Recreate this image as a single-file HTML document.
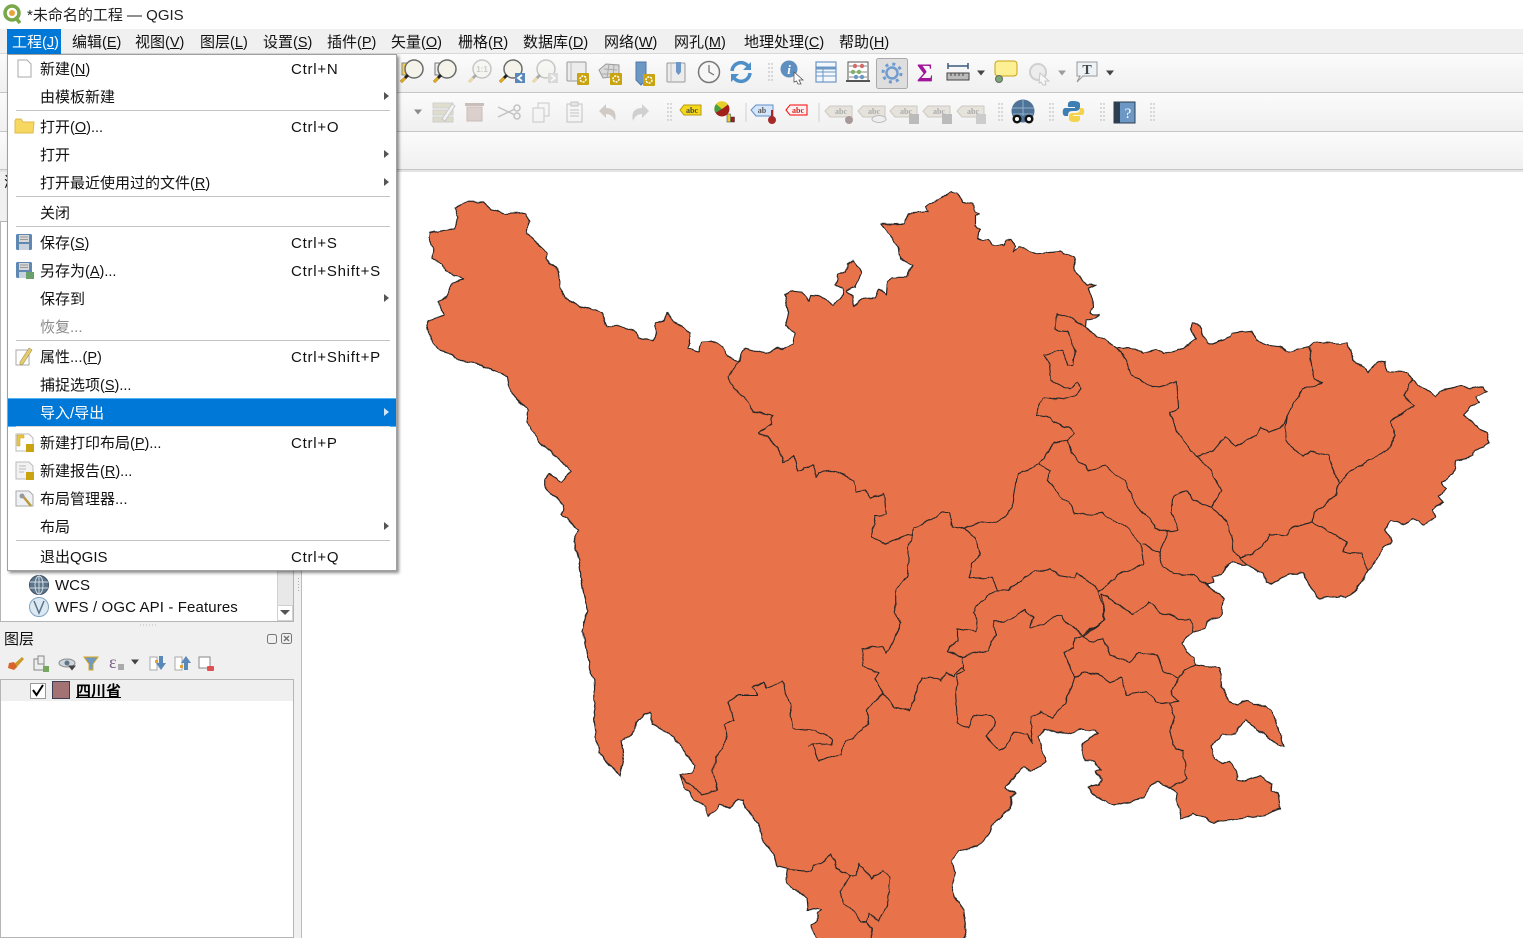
<!DOCTYPE html>
<html lang="zh"><head><meta charset="utf-8"><title>QGIS</title>
<style>
*{box-sizing:border-box}
html,body{margin:0;padding:0;width:1523px;height:938px;overflow:hidden;background:#fff;font-family:"Liberation Sans","Noto Sans CJK SC",sans-serif;font-size:15px;color:#000}
.a{position:absolute;white-space:nowrap}
.tb{position:absolute;left:0;width:1523px;background:linear-gradient(#fbfbfb,#f0f0f0);border-bottom:1px solid #c6c6c6}
.m{position:absolute;top:34px;line-height:18px;color:#111}
i{font-style:normal;font-size:14.5px;line-height:1}
#menu{position:absolute;left:7px;top:54px;width:390px;height:517px;background:#fff;border:1px solid #a0a0a0;box-shadow:2px 2px 3px rgba(0,0,0,.45)}
.r{position:absolute;left:32px;line-height:18px;white-space:nowrap;color:#111;margin-top:2px}
.k{position:absolute;left:283px;line-height:18px;white-space:nowrap;letter-spacing:.75px;color:#111;margin-top:2px}
.s{position:absolute;left:8px;width:374px;height:1px;background:#c4c4c4;margin-top:-1px}
.ar{position:absolute;left:376px;width:0;height:0;border-left:5px solid #555;border-top:4.5px solid transparent;border-bottom:4.5px solid transparent}
</style></head><body>
<div class="a" style="left:0;top:0;width:1523px;height:29px;background:#fff"></div>
<div class="a" style="left:27px;top:6px;line-height:19px;color:#222">*未命名的工程 — QGIS</div>
<div class="a" style="left:0;top:29px;width:1523px;height:25px;background:#f0f0f0;border-bottom:1px solid #d8d8d8"></div>
<div class="a" style="left:7px;top:29px;width:54px;height:25px;background:#0078d7"></div>
<div class="m" style="left:12px;color:#fff">工程<i>(<u>J</u>)</i></div>
<div class="m" style="left:72px">编辑<i>(<u>E</u>)</i></div>
<div class="m" style="left:135px">视图<i>(<u>V</u>)</i></div>
<div class="m" style="left:200px">图层<i>(<u>L</u>)</i></div>
<div class="m" style="left:263px">设置<i>(<u>S</u>)</i></div>
<div class="m" style="left:327px">插件<i>(<u>P</u>)</i></div>
<div class="m" style="left:391px">矢量<i>(<u>O</u>)</i></div>
<div class="m" style="left:458px">栅格<i>(<u>R</u>)</i></div>
<div class="m" style="left:523px">数据库<i>(<u>D</u>)</i></div>
<div class="m" style="left:604px">网络<i>(<u>W</u>)</i></div>
<div class="m" style="left:674px">网孔<i>(<u>M</u>)</i></div>
<div class="m" style="left:744px">地理处理<i>(<u>C</u>)</i></div>
<div class="m" style="left:839px">帮助<i>(<u>H</u>)</i></div>

<div class="tb" style="top:54px;height:39px"></div>
<div class="tb" style="top:93px;height:39px"></div>
<div class="tb" style="top:132px;height:38px"></div>
<div class="a" style="left:0;top:170px;width:1523px;height:2px;background:#e4e4e4"></div>

<!-- left panel -->
<div class="a" style="left:0;top:172px;width:302px;height:766px;background:#f0f0f0;border-right:1px solid #bbb"></div>
<div class="a" style="left:4px;top:174px;line-height:18px">浏览</div>
<div class="a" style="left:0;top:221px;width:294px;height:401px;background:#fff;border:1px solid #b5b5b5"></div>
<div class="a" style="left:277px;top:222px;width:16px;height:383px;background:#e8e8e8;border-left:1px solid #d0d0d0"></div>
<div class="a" style="left:277px;top:605px;width:16px;height:16px;background:#fff;border:1px solid #d0d0d0"></div>
<div class="a" style="left:280px;top:610px;width:0;height:0;border-top:5px solid #555;border-left:5px solid transparent;border-right:5px solid transparent"></div>
<div class="a" style="left:55px;top:577px;line-height:18px;color:#111;font-size:15px">WCS</div>
<div class="a" style="left:55px;top:599px;line-height:18px;color:#111;font-size:15px;letter-spacing:.12px">WFS / OGC API - Features</div>
<div class="a" style="left:4px;top:631px;line-height:18px;color:#111">图层</div>
<div class="a" style="left:0;top:679px;width:294px;height:259px;background:#fff;border:1px solid #b5b5b5"></div>
<div class="a" style="left:1px;top:680px;width:292px;height:21px;background:#efefef"></div>
<div class="a" style="left:30px;top:683px;width:16px;height:16px;background:#fff;border:1px solid #999"></div>
<div class="a" style="left:52px;top:681px;width:18px;height:18px;background:#a37272;border:1px solid #3d3d55"></div>
<div class="a" style="left:76px;top:682px;line-height:19px;font-weight:bold;text-decoration:underline;color:#000">四川省</div>

<!-- map -->
<svg class="a" style="left:0;top:0" width="1523" height="938" viewBox="0 0 1523 938">
<defs><filter id="rough" x="300" y="170" width="1223" height="790" filterUnits="userSpaceOnUse"><feTurbulence type="fractalNoise" baseFrequency="0.09" numOctaves="2" seed="4"/><feDisplacementMap in="SourceGraphic" scale="5" xChannelSelector="R" yChannelSelector="G"/></filter></defs>
<g filter="url(#rough)">
<path fill="#e8724a" stroke="#262626" stroke-width="1.2" stroke-linejoin="round" d="M468.6 201.7L482.9 202 491 209.3 507 213.3 525 212.3 529.3 221.7 527.5 233.3 533.9 240 548.2 253.3 547 258.3 557 268.3 560.7 286.7 566 298.3 575 305 596.4 310.7 601.8 313.3 607.9 326.7 618.6 325.7 635.7 331.7 638.6 336.7 651.8 341.3 656.4 333.3 655.7 322.7 664.3 320 667 312 673.2 321.7 682 325 690 333.3 690 343.3 686.8 348.3 698.2 352.7 701.8 341.7 714.3 341 723.2 348.3 728.6 356.7 739.3 361.7 741 353.3 744.6 348.3 766 353.3 778.6 346.7 784 349.3 792.9 345 794.6 333.3 785.7 325 788.6 313.3 784.6 295 791 290.7 801.8 291.7 809 300.7 810.7 295 819.6 295.7 833.9 306 842.9 295 842.9 288.3 835 285 837.5 275 846.4 271.7 847 263.3 853.6 259.3 861.4 274 855.4 286.7 846.4 290.7 851.8 296.7 853.6 306 862.5 298.3 875 297.3 878.6 289.3 886.4 294 887.5 283.3 892.9 277.3 907 277.3 912.5 265 900 258.3 898.2 248.3 892.9 240 881.4 224 904.3 223.3 908.9 213.3 928.6 211.7 925 206.7 940 199 950 191.7 956.7 192.3 961.7 201.7 973.3 204.3 975 212.3 979.3 214 975 216.7 975 225 979.3 228.3 977.7 238.3 983.3 241 988.3 239 991.7 244.3 1003.3 245.7 1006.7 240 1011.7 240 1014 246.7 1013.3 252.3 1018.3 247.7 1025 248.3 1036.7 253.3 1060 251 1073.3 257.7 1075 271.7 1085 281.7 1086.7 285 1096.7 284.3 1088.3 288.3 1093.3 305 1090 312.3 1098.3 315 1094 318.3 1085.7 320 1085 328.3 1105 340 1117 348.3 1139 350 1142.9 353.3 1157 350 1164 354 1173 350 1184 346.7 1196.4 340 1190 330 1192.9 323.3 1198 324 1206.4 343.3 1210.7 344 1230 338 1232 333.3 1251.8 330.7 1257 340 1266 345 1278.6 346.7 1287.5 351.7 1309 346.7 1314 342.3 1348 343.3 1353.6 360 1367.9 371.7 1371.4 368 1378.6 360.7 1384 361.7 1387.5 371.7 1409 372.7 1411.8 379.3 1421.4 386.7 1435.7 396.7 1441 390 1460.7 386 1469.6 388.3 1484 386 1486.8 391.7 1475 396.7 1480 403.3 1471.4 406.7 1463.6 415 1475 425 1487.5 433.3 1489.3 442.7 1475 450 1473.2 456.7 1457 460 1453.6 473.3 1441 483.3 1446.4 488.3 1439.3 496.7 1442.9 501.7 1432 510 1435.7 516.7 1424.3 526 1413.6 518.3 1403.6 523.3 1391 520.7 1384.6 530 1392 540 1378.6 556.7 1367.9 571.7 1357 588.3 1346.4 598.3 1341 595 1319.6 599 1314.3 591.7 1307 583.3 1303.6 573.3 1289.3 573.3 1273.2 582.7 1266 581.7 1264.3 573.3 1253.6 568.3 1247 566 1232 561.7 1225 566.7 1221.4 575 1212.5 576.7 1214.3 583.3 1206.4 585 1224.3 599 1221.4 615 1207 621.7 1205.4 628.3 1193 631.7 1181.4 643.3 1185.7 651.7 1194.6 657.3 1195 665 1220 668.3 1221.7 686.7 1228.3 701.7 1238.3 705 1246.7 699 1253.3 705 1266.7 705 1272.3 711.7 1280 733.3 1284 746 1278.3 745 1266.7 735 1256.7 730 1245.7 720 1239 728.3 1236.7 734.3 1223.3 734 1211.7 745 1215 760 1223.3 764 1228.3 760.7 1236.7 770 1236.7 779.3 1246.7 780.7 1260 775.7 1272.3 784 1271.7 790 1278.3 793.3 1280 808.3 1266.7 815 1240 818.3 1221.7 820.7 1213.3 823.3 1203.3 818.3 1193.3 813.3 1181.7 819 1180 808.3 1175.7 800 1176.7 793.3 1170 788.3 1158.3 782.7 1151.7 785 1143.3 798.3 1128.3 801.7 1113.3 806 1106.7 803.3 1096.7 796.7 1088.3 787.3 1098.3 785 1101.7 780 1096.7 771.7 1100.7 770.7 1095 761.7 1085 761.7 1082.3 743.3 1098.3 733.3 1095 730.7 1081.7 729.3 1066.7 733.3 1053.3 731.7 1045 729.3 1038.6 738.3 1045.7 761.7 1030.7 771.7 1023.6 767.3 1004 786.7 1016.4 794.3 1011 796.7 1011 808.3 991.4 826.7 989.6 833.3 977 846.7 959.3 850.7 952 860 955 873.3 951.4 885 954 896.7 963 910 966.4 930 962 950 823.6 950 812.9 930 811 925 816.4 921.7 816.4 913.3 821.8 909.3 818.2 908.3 808.6 910 807.5 898.3 786 883.3 787.9 869.3 777 866.7 773.6 853.3 764.6 843.3 757.5 823.3 745 808.3 743.2 800 737.9 799.3 729.6 808.3 719.3 805 708.6 817.3 705.7 806.7 695 800 684.3 786.7 680 776 691.4 771.7 695 765 684.3 751.7 673.6 736.7 652.9 723.3 650.7 711.7 643.2 715 636 723.3 634.3 731.7 621 740 623.6 756.7 620 776.7 598.6 751.7 593.2 713.3 595 703.3 594.3 680 589.6 666.7 582.5 631.7 587.9 610 582.5 585 578.6 560 574.3 536.7 578.6 529.3 562.5 515 563.6 505 545.7 488.3 545.7 478.3 550 474 561.4 481.7 571.4 470.7 541 443.3 526.8 421.7 527.5 410 508.9 388.3 507 377.7 482 365 460.7 361 450 353.3 439.3 350 430.4 340 426.8 321.7 443.6 315 439.3 302.7 447 296 452.5 284 463.6 278.3 444.6 271.7 442 262.7 432 258.3 432.9 248.3 428.6 238.3 429.3 232.7 453.6 228.3 458.9 216.7 455.4 208.3Z"/>
<g fill="none" stroke="#262626" stroke-width="1.1" stroke-linejoin="round">
<path d="M739.3 361.7L727.9 376.7 733.9 388.3 744.6 396.7 753.6 411.7 773.2 415 771.4 425 759 433.3 767.9 436.7 778.6 448.3 782 461.7 794.6 456 797 470 814.3 465 815 477.3 817.9 471.7 832 470 853.6 480 857 491.7 866 490 871.4 498.3 884 493.3 886.4 515 875 516.7 872 536.7 885.7 544.3 907 534 913.6 535 914.3 528.3 932 518.3 941 512.3 950 513.3 953.6 526.7 964.3 528.3 980.4 521.7 992.9 523.3 1007 516.7 1012.5 503.3 1017.9 473.3 1039.3 465 1053.6 443.3 1067.9 440 1074.3 433.3 1071.4 428.3 1053.6 421.7 1050 417.3 1035.7 415 1042.9 397.3 1057 399.3 1073.2 396.7 1082 389.3 1076.8 382.7 1069.6 389.3 1050 380 1048.2 363.3 1043.6 355 1062.5 350 1067.9 366 1073.2 366 1075 350 1067.9 331.7 1055.4 330 1057 313.3 1069.6 316.7 1085 328.3"/>
<path d="M913.6 535L908 546.7 908 560 907.5 576.7 895.7 588.3 895.7 611.7 900.4 623.3 895 640 886 652.7 882.5 646 862 649.3 863.6 666.7 879 673.3 875.4 678.3 883.6 693.3 866.4 710 868.2 723.3 859.3 733.3 845 741.7 841.4 755 832.5 756.7 819.3 761.7 813.6 743.3 807.5 746.7 813.6 743.3 831.8 745 832.5 740 816.4 730.7 793.2 728.3 789.6 703.3 782.5 681.7 766.4 688.3 762.9 682.7 752 687.3 757.5 695 739.6 695 728.2 701.7 733.6 720 723.6 725 727 740 716.4 756.7 712.9 770 717.5 790 702 794.3 680.7 776.7"/>
<path d="M883.6 693.3L895 706.7 909.3 710.7 912.9 700 921.8 678.3 929 676.7 941.4 680.7 945 673.3 954 676.7 961 667.3 964.6 670.7 957.5 675 955.7 695 957.5 723.3 968.2 728.3 973.6 714 991.4 715 995 723.3 986 736.7 998.6 751.7 1005 746.7 1012.9 733.3 1027 733.3 1032.5 743.3 1030.7 723.3 1030.7 716.7 1041.4 711.7 1052 718.3 1064.6 703.3 1075.7 678.3 1081.7 671.7 1098.3 674 1110 682.3 1121.7 677.3 1127.3 695 1146.7 691.7 1156.7 701.7 1170 703.3 1175 716.7 1169.3 731.7 1174 748.3 1183.3 751.7 1186.7 778.3 1170 788.3"/>
<path d="M1170 703.3L1178.3 701.7 1170.7 691.7 1178.3 678.3 1185 670 1195 665M1178.3 678.3L1165 671.7 1156.7 655 1140 652.7 1129.3 661.7 1110 655 1103.3 639.3 1090 641.7 1082.7 635 1075 638.3 1073.3 648.3 1064 653.3 1068.3 661.7 1071.7 670 1075.7 678.3"/>
<path d="M1082.7 635L1065 621.7 1061.7 614 1053.3 616 1045 625 1030.7 628.3 1032.5 618.3 1025.4 609.3 1003.9 621.7 993.2 621.7 995 635 987.9 650 962.9 656.7 946.8 651.7 957.5 640 957.5 628.3 975.4 631.7 977 621.7 972.9 611.7 989.6 593.3 1007.5 590 1034.3 571.7 1050.4 568.3 1057.5 575 1073.6 578.3 1077 571.7 1098.6 591.7 1102 603.3 1105 620 1082.7 635M962.9 656.7L962.9 668.3"/>
<path d="M1098.6 591.7L1117.9 575 1142.9 565 1141 543.3 1125 526.7 1107 516.7 1101.8 511.7 1089.3 515 1073.2 513.3 1071.4 505 1059 495 1048.2 480 1050 470 1039.3 465"/>
<path d="M964.3 528.3L975 538.3 980.4 553.3 973.2 563.3 969.6 578.3 992.9 577.3 998.2 591.7"/>
<path d="M1067.9 440L1071.4 453.3 1089.3 470 1105.4 466 1125 481.7 1137.5 508.3 1150 518.3 1155.4 528.3 1167.9 531.7 1159 551.7 1151.8 550 1142.9 543.3"/>
<path d="M1167.9 531.7L1178.6 530 1171.4 513.3 1173.2 496.7 1187.5 491.7 1192.9 500 1212.5 507.3 1221.4 490 1210.7 470 1196.4 456.7 1178.6 435 1169.6 413.3 1178.6 408.3 1176.8 381.7 1153.6 386.7 1132 375 1126.8 360 1117 348.3"/>
<path d="M1196.4 456.7L1212.5 451.7 1225 436.7 1235.7 446.7 1257 435 1260.7 428.3 1269.6 431.7 1284 426 1287.5 415 1301.8 390 1321.4 382.7 1314.3 378.3 1309 346.7"/>
<path d="M1287.5 415L1284 440 1303.6 456.7 1310.7 451.7 1326.8 455 1339.3 483.3 1337.5 493.3 1314.3 513.3 1312.5 521.7 1292.9 528.3 1285.7 536 1269.6 533.3 1262.5 546.7 1250 555 1239.3 556.7 1233.9 550 1228.6 526.7 1221.4 515 1212.5 507.3"/>
<path d="M1339.3 483.3L1350 471.7 1387.5 450 1395.7 435 1391 421.7 1414.3 405 1403.6 396.7 1411.8 379.3"/>
<path d="M1312.5 521.7L1346.4 541.7 1342.9 551.7 1360.7 553.3 1367.9 571.7M1239.3 556.7L1247 566"/>
<path d="M1159 551.7L1162.5 566.7 1175 574 1192.9 575 1207 585"/>
<path d="M1101.8 593.3L1121.4 606.7 1133.9 615 1148.2 602.7 1160.7 611.7 1178.6 620 1190 619.3 1193 631.7"/>
<path d="M1101.8 593.3L1105.4 620 1082.9 636.7"/>
<path d="M787.9 869.3L811 871.7 814.6 865 823.6 861.7 830.7 854 836 868.3 850.4 875.7 839.6 891.7 843.2 903.3 855.7 913.3 861 921.7 866.4 921.7 868.2 913.3 879 921.7 886 906.7 887.9 900 890.4 876.7 882.5 870 871.8 879.3 859.3 863.3 855.7 875 850.4 875.7M866.4 921.7L871.8 928.3 871.8 950"/>
</g></g>
</svg>

<!-- toolbar & panel icons -->
<svg class="a" style="left:0;top:0" width="1523" height="938" viewBox="0 0 1523 938">
<defs>
<g id="lens"><circle cx="2" cy="-3" r="9" fill="#f3f3ea" stroke="#6b6b6b" stroke-width="1.5"/><path d="M-4 3L-11 10" stroke="#222" stroke-width="3"/><path d="M-7 6L-11 10" stroke="#e0a820" stroke-width="3"/></g>
<g id="gearb"><rect x="-6" y="-6" width="12" height="12" rx="1" fill="#c9a310"/><circle r="3" fill="none" stroke="#fff" stroke-width="1.5" stroke-dasharray="2 1"/></g>
<g id="lab"><path d="M-12 -5H10V6H-12L-17 0Z" fill="#e5e3dc" stroke="#ccc9c0"/><text x="-1" y="3" font-family="Liberation Serif" font-size="8" text-anchor="middle" fill="#aaa" font-weight="bold">abc</text></g>
<g id="grip" fill="#aaa"><circle cx="0" cy="-8" r=".7"/><circle cx="3" cy="-8" r=".7"/><circle cx="0" cy="-4" r=".7"/><circle cx="3" cy="-4" r=".7"/><circle cx="0" cy="0" r=".7"/><circle cx="3" cy="0" r=".7"/><circle cx="0" cy="4" r=".7"/><circle cx="3" cy="4" r=".7"/><circle cx="0" cy="8" r=".7"/><circle cx="3" cy="8" r=".7"/></g>
<path id="dd" d="M-4 -2.500H4L0 2.500Z" fill="#444"/>
</defs>
<!-- logo -->
<circle cx="12" cy="13" r="7" fill="none" stroke="#78a848" stroke-width="3.500"/><path d="M15 17L20 23" stroke="#78a848" stroke-width="3.500"/><circle cx="12" cy="13" r="3" fill="#e8a33c"/>
<!-- row1 -->
<g transform="translate(412,72)"><rect x="-10" y="-9" width="10" height="12" fill="#f2d34a" stroke="#888"/><use href="#lens"/></g>
<g transform="translate(445,72)"><rect x="-10" y="-9" width="10" height="12" fill="#eee" stroke="#777"/><use href="#lens"/></g>
<g transform="translate(480,72)" opacity=".35"><use href="#lens"/><text x="2" y="0" font-size="8" text-anchor="middle" font-weight="bold" fill="#777">1:1</text></g>
<g transform="translate(511,72)"><use href="#lens"/><rect x="4" y="1" width="10" height="10" fill="#5a88b8"/><path d="M11 3L7 6 11 9" fill="none" stroke="#fff" stroke-width="1.800"/></g>
<g transform="translate(544,72)" opacity=".35"><use href="#lens"/><rect x="4" y="1" width="10" height="10" fill="#aaa"/><path d="M7 3L11 6 7 9" fill="none" stroke="#fff" stroke-width="1.800"/></g>
<g transform="translate(576,71)"><rect x="-9" y="-9" width="19" height="19" rx="1" fill="#ececec" stroke="#999"/><path d="M-5 -9V10" stroke="#bbb"/><use href="#gearb" x="7" y="8"/></g>
<g transform="translate(609,72)"><path d="M-10 -2L-3 -8 10 -7 10 4 -6 6Z" fill="#d9d9d9" stroke="#999"/><path d="M-5 -3L8 -2M-7 2L8 2M0 -8L-2 6M5 -8L4 5" stroke="#aaa"/><use href="#gearb" x="7" y="7"/></g>
<g transform="translate(643,72)"><path d="M-7 -10H3V8L-2 13 -7 8Z" fill="#6d97c4" stroke="#4f7aa6"/><use href="#gearb" x="6" y="8"/></g>
<g transform="translate(676,72)"><rect x="-9" y="-9" width="18" height="19" rx="1" fill="#ececec" stroke="#999"/><path d="M-5 -9V10" stroke="#bbb"/><path d="M0 -10H5V0L2.500 3 0 0Z" fill="#6d97c4"/></g>
<g transform="translate(709,72)"><circle r="10.500" fill="#f6f6f6" stroke="#777" stroke-width="1.500"/><path d="M0 -7V0L5 3" fill="none" stroke="#777" stroke-width="1.300"/></g>
<g transform="translate(741,72)" fill="none" stroke="#4f8fc8" stroke-width="3.500"><path d="M-9 -1A9 9 0 0 1 7 -6"/><path d="M9 1A9 9 0 0 1 -7 6"/><path d="M10 -10V-2H2Z M-10 10V2H-2Z" fill="#4f8fc8" stroke="none"/></g>
<use href="#grip" x="769" y="72"/>
<g transform="translate(792,71)"><circle cx="-3" cy="-2" r="8.500" fill="#5f8fc0"/><text x="-3" y="3" font-family="Liberation Serif" font-style="italic" font-weight="bold" font-size="13" fill="#fff" text-anchor="middle">i</text><path d="M2 1L11 9 7 9 9 13 6 13 4.500 10 2 11Z" fill="#fff" stroke="#555" stroke-width=".8"/></g>
<g transform="translate(826,72)"><rect x="-10" y="-10" width="20" height="20" fill="#f4f8fc" stroke="#6d97c4" stroke-width="1.200"/><path d="M-10 -5H10V-3H-10ZM-10 0H10M-10 4H10M-3 -3V10" fill="#6d97c4" stroke="#6d97c4"/></g>
<g transform="translate(858,72)"><rect x="-10" y="-10" width="20" height="19" fill="#fff" stroke="#555"/><path d="M-12 9H12" stroke="#555" stroke-width="2"/><path d="M-9 -6H9M-9 0H9M-9 5H9" stroke="#888"/><circle cx="-3" cy="-6" r="2.200" fill="#d46a6a"/><circle cx="4" cy="-6" r="2.200" fill="#d46a6a"/><circle cx="-5" cy="0" r="2.200" fill="#7fb26a"/><circle cx="1" cy="0" r="2.200" fill="#7fb26a"/><circle cx="-2" cy="5" r="2.200" fill="#6d97c4"/><circle cx="4" cy="5" r="2.200" fill="#6d97c4"/></g>
<rect x="876.500" y="58.500" width="31" height="30" rx="2" fill="#dedede" stroke="#aaa"/>
<g transform="translate(892,73)" fill="none" stroke="#6f9bd1"><circle r="5.500" stroke-width="2.400"/><circle r="9" stroke-width="3" stroke-dasharray="3 4.070"/></g>
<text x="925" y="81" font-family="Liberation Serif" font-size="25" font-weight="bold" fill="#a0159a" text-anchor="middle">Σ</text>
<g transform="translate(958,73)"><path d="M-10 -7H10M-10 -10V-4M10 -10V-4" stroke="#3b5a7c" stroke-width="1.500"/><rect x="-11" y="0" width="22" height="7" fill="#bbb" stroke="#444"/><path d="M-7 0V3M-3 0V3M1 0V3M5 0V3" stroke="#444"/></g>
<use href="#dd" x="981" y="73"/>
<g transform="translate(1006,70)"><rect x="-11" y="-9" width="22" height="15" rx="3" fill="#fdf094" stroke="#c9a310"/><circle cx="-7" cy="9" r="3.500" fill="#78a878" stroke="#666"/></g>
<g transform="translate(1038,72)" opacity=".35"><circle r="8" fill="#ddd" stroke="#888" stroke-width="2"/><path d="M2 1L11 9 7 9 8 13 5 13 3 10 1 11Z" fill="#fff" stroke="#777"/></g>
<use href="#dd" x="1062" y="73" opacity=".5"/>
<g transform="translate(1087,70)"><path d="M-10 -8H10V6H-4L-10 12 -7 6H-10Z" fill="#ecf2f6" stroke="#999"/><text x="0" y="4" font-family="Liberation Serif" font-size="14" font-weight="bold" text-anchor="middle" fill="#444">T</text></g>
<use href="#dd" x="1110" y="73"/>
<!-- row2 -->
<use href="#dd" x="418" y="112" opacity=".6"/>
<g transform="translate(443,112)" opacity=".4"><path d="M-10 -9H10V-4H-10ZM-10 -2H10V3H-10ZM-10 5H10V10H-10Z" fill="#bdb98f" stroke="#999"/><path d="M-1 7L9 -8 12 -6 2 9Z" fill="#eee" stroke="#888"/></g>
<g transform="translate(475,112)" opacity=".4"><rect x="-10" y="-9" width="19" height="3" fill="#8a6a60"/><rect x="-8" y="-5" width="15" height="14" fill="#b59a90" stroke="#8a6a60"/></g>
<g transform="translate(509,112)" opacity=".4" fill="none" stroke="#777" stroke-width="1.500"><path d="M-11 -5L6 3M-11 5L6 -3"/><circle cx="8" cy="-4" r="3"/><circle cx="8" cy="4" r="3"/></g>
<g transform="translate(541,112)" opacity=".4" fill="#f5f5f5" stroke="#888"><rect x="-3" y="-9" width="11" height="13"/><rect x="-8" y="-4" width="11" height="14"/></g>
<g transform="translate(575,112)" opacity=".4" fill="#f5f5f5" stroke="#777"><rect x="-8" y="-8" width="15" height="18"/><rect x="-4" y="-10" width="7" height="4" fill="#ccc"/><path d="M-5 -2H4M-5 1H4M-5 4H4"/></g>
<g transform="translate(608,112)" opacity=".35"><path d="M-9 -1L-2 -8V-4C6 -4 9 1 7 9 5 4 2 2 -2 2V6Z" fill="#8a7a70"/></g>
<g transform="translate(640,112)" opacity=".35"><path d="M9 -1L2 -8V-4C-6 -4 -9 1 -7 9 -5 4 -2 2 2 2V6Z" fill="#8a8a8a"/></g>
<use href="#grip" x="668" y="112"/>
<g transform="translate(691,110)"><path d="M-7 -5H10V5H-7L-11 0Z" fill="#f3d81c" stroke="#b89a10"/><text x="1" y="3" font-family="Liberation Serif" font-size="8" font-weight="bold" text-anchor="middle" fill="#444">abc</text></g>
<g transform="translate(723,111)"><circle cx="-1" cy="-2" r="7.500" fill="#a3201a"/><path d="M-1 -2L-1 -9.500A7.500 7.500 0 0 0 -7.500 2Z" fill="#4b9c3c"/><path d="M-1 -2L-7 -7A7.500 7.500 0 0 1 5 -6.500Z" fill="#e6cf28"/><rect x="4" y="3" width="3.500" height="8" fill="#e6cf28" stroke="#333" stroke-width=".5"/><rect x="8" y="6" width="3.500" height="5" fill="#a3201a" stroke="#333" stroke-width=".5"/></g>
<path d="M746 103V122" stroke="#d0d0d0"/>
<g transform="translate(764,110)"><path d="M-8 -5H9V6H-8L-13 0Z" fill="#d6e6fa" stroke="#5f8fc8"/><text x="-2" y="3" font-family="Liberation Serif" font-size="8" font-weight="bold" text-anchor="middle" fill="#555">ab</text><circle cx="8" cy="10" r="4" fill="#a52a2a"/><path d="M8 0V8" stroke="#a52a2a" stroke-width="2"/></g>
<g transform="translate(797,110)"><path d="M-7 -5H10V5H-7L-11 0Z" fill="#fdf0f0" stroke="#f00"/><text x="1" y="3" font-family="Liberation Serif" font-size="8" font-weight="bold" text-anchor="middle" fill="#c22">abc</text></g>
<path d="M819 103V122" stroke="#d0d0d0"/>
<g transform="translate(841,112)"><use href="#lab" transform="translate(1,-1)"/><circle cx="8" cy="8" r="4" fill="#a89a9a"/></g>
<g transform="translate(874,112)"><use href="#lab" transform="translate(1,-1)"/><ellipse cx="5" cy="7" rx="7" ry="3.500" fill="#eee" stroke="#bbb"/></g>
<g transform="translate(906,112)"><use href="#lab" transform="translate(1,-1)"/><rect x="3" y="2" width="10" height="10" fill="#bbb"/></g>
<g transform="translate(939,112)"><use href="#lab" transform="translate(1,-1)"/><rect x="3" y="2" width="10" height="10" fill="#bbb"/></g>
<g transform="translate(973,112)"><use href="#lab" transform="translate(1,-1)"/><rect x="3" y="2" width="10" height="10" fill="#ccc"/></g>
<use href="#grip" x="999" y="112"/>
<g transform="translate(1023,111)"><circle r="11.500" fill="#4f7396"/><path d="M-11 -3H11M-10 3H10M0 -11V5" stroke="#8fb0cc"/><circle cx="-6" cy="8" r="4.500" fill="#111"/><circle cx="6" cy="8" r="4.500" fill="#111"/><circle cx="-6" cy="8" r="2" fill="#fff"/><circle cx="6" cy="8" r="2" fill="#fff"/></g>
<use href="#grip" x="1050" y="112"/>
<g transform="translate(1074,112)"><path d="M-1 -11C-7 -11 -6 -8 -6 -5H1V-4H-9C-12 -4 -12 4 -9 4H-6C-6 -1 -4 -1 1 -1 5 -1 6 -3 6 -5V-8C6 -10 3 -11 -1 -11Z" fill="#3d7fb2"/><path d="M1 10C7 10 6 7 6 4H-1V3H8C11 3 11 -4 8 -4H6C6 1 4 1 -1 1 -5 1 -5 3 -5 5V7C-5 9 -3 10 1 10Z" fill="#f4d24c"/></g>
<use href="#grip" x="1101" y="112"/>
<g transform="translate(1125,112)"><rect x="-11" y="-10" width="21" height="21" fill="#6d97c4" stroke="#2c3e50"/><rect x="-11" y="-10" width="6" height="21" fill="#2c3e50"/><text x="3" y="6" font-family="Liberation Serif" font-size="15" text-anchor="middle" fill="#fff">?</text></g>
<use href="#grip" x="1151" y="112"/>
<!-- panel icons -->
<g transform="translate(39,585)"><circle r="9.500" fill="#5d7489" stroke="#3a4f63"/><path d="M-9 -3H9M-9 3H9M0 -9V9" stroke="#cfdbe5"/><ellipse rx="4" ry="9" fill="none" stroke="#cfdbe5"/></g>
<g transform="translate(39,607)"><circle r="9.500" fill="#dce8f2" stroke="#7fa2c2"/><path d="M-5 -6L0 6 5 -6" fill="none" stroke="#5d7489" stroke-width="1.500"/></g>
<g transform="translate(16,663)"><path d="M-3 2L6 -6 8 -4 0 5Z" fill="#c99a2a"/><path d="M-7 0L-2 -1 1 4 -2 7 -8 5Z" fill="#d8642a"/></g>
<g transform="translate(41,663)" fill="#eee" stroke="#888"><rect x="-7" y="-4" width="10" height="11"/><rect x="-3" y="-7" width="6" height="8"/><rect x="2" y="3" width="6" height="6" fill="#74a85c" stroke="none"/></g>
<g transform="translate(67,663)"><ellipse rx="8" ry="4" fill="#cfd6dc" stroke="#888"/><circle r="2.500" fill="#5d7489"/><use href="#dd" x="5" y="5"/></g>
<path d="M84 657H98L93 664V670H89V664Z" fill="#7098c0" stroke="#d8a820"/>
<text x="109" y="668" font-family="Liberation Serif" font-size="18" fill="#7b5c88">ε</text><rect x="118" y="664" width="6" height="6" fill="#aaa"/>
<use href="#dd" x="135" y="662"/>
<g transform="translate(157,663)"><rect x="-7" y="-6" width="7" height="13" fill="#fff" stroke="#aaa"/><rect x="-2" y="-3" width="3" height="3" fill="#e6a030"/><path d="M2 -7H6V0H9L4 7 -1 0H2Z" fill="#5a88b8"/></g>
<g transform="translate(182,663)"><rect x="-7" y="-6" width="7" height="13" fill="#fff" stroke="#aaa"/><rect x="-2" y="2" width="3" height="3" fill="#e6a030"/><path d="M2 7H6V0H9L4 -7 -1 0H2Z" fill="#5a88b8"/></g>
<g transform="translate(206,663)"><rect x="-7" y="-6" width="11" height="11" fill="#fff" stroke="#888"/><rect x="1" y="3" width="7" height="5" rx="1" fill="#e05050"/></g>
<g fill="none" stroke="#777"><rect x="267.500" y="634.500" width="9" height="9" rx="2"/><rect x="281.500" y="633.500" width="10" height="10" rx="2"/><path d="M284 636L289 641M289 636L284 641" stroke-width="1.500"/></g>
<path d="M140 625H157" stroke="#bbb" stroke-dasharray="1 2"/>
<path d="M298.500 578V592" stroke="#aaa" stroke-dasharray="1 2"/>
<path d="M33 690L36.500 695 43 685" fill="none" stroke="#000" stroke-width="2"/>
</svg>

<!-- menu -->
<div id="menu">
<div class="a" style="left:0;top:343px;width:388px;height:29px;background:#0078d7;border-top:1px solid #53b2f5;border-bottom:1px solid #53b2f5"></div>
<div class="r" style="top:4px">新建<i>(<u>N</u>)</i></div><div class="k" style="top:4px">Ctrl+N</div>
<div class="r" style="top:32px">由模板新建</div><div class="ar" style="top:37px"></div>
<div class="s" style="top:56px"></div>
<div class="r" style="top:62px">打开<i>(<u>O</u>)...</i></div><div class="k" style="top:62px">Ctrl+O</div>
<div class="r" style="top:90px">打开</div><div class="ar" style="top:95px"></div>
<div class="r" style="top:118px">打开最近使用过的文件<i>(<u>R</u>)</i></div><div class="ar" style="top:123px"></div>
<div class="s" style="top:142px"></div>
<div class="r" style="top:148px">关闭</div>
<div class="s" style="top:172px"></div>
<div class="r" style="top:178px">保存<i>(<u>S</u>)</i></div><div class="k" style="top:178px">Ctrl+S</div>
<div class="r" style="top:206px">另存为<i>(<u>A</u>)...</i></div><div class="k" style="top:206px">Ctrl+Shift+S</div>
<div class="r" style="top:234px">保存到</div><div class="ar" style="top:239px"></div>
<div class="r" style="top:262px;color:#8a8a8a">恢复...</div>
<div class="s" style="top:286px"></div>
<div class="r" style="top:292px">属性...<i>(<u>P</u>)</i></div><div class="k" style="top:292px">Ctrl+Shift+P</div>
<div class="r" style="top:320px">捕捉选项<i>(<u>S</u>)...</i></div>
<div class="r" style="top:348px;color:#fff">导入/导出</div><div class="ar" style="top:353px;border-left-color:#cfe6fa"></div>
<div class="s" style="top:372px;background:#d8d8d8"></div>
<div class="r" style="top:378px">新建打印布局<i>(<u>P</u>)...</i></div><div class="k" style="top:378px">Ctrl+P</div>
<div class="r" style="top:406px">新建报告<i>(<u>R</u>)...</i></div>
<div class="r" style="top:434px">布局管理器...</div>
<div class="r" style="top:462px">布局</div><div class="ar" style="top:467px"></div>
<div class="s" style="top:486px"></div>
<div class="r" style="top:492px">退出QGIS</div><div class="k" style="top:492px">Ctrl+Q</div>
<svg class="a" style="left:-8px;top:-55px" width="40" height="530" viewBox="0 0 40 530">
<path d="M18 60H27L31 64V77H18Z" fill="#fff" stroke="#aaa"/>
<path d="M15 121V133H33L34 122H23L21 119H16Z" fill="#f6d860" stroke="#e0b84a"/>
<g><rect x="16" y="234" width="16" height="16" rx="1.500" fill="#5f88b2"/><rect x="19" y="235" width="10" height="7" fill="#d8d8d8"/><path d="M20 237H28M20 239.500H28" stroke="#999"/><rect x="19" y="244" width="10" height="6" fill="#c9d3de"/></g>
<g><rect x="16" y="262" width="16" height="16" rx="1.500" fill="#5f88b2"/><rect x="19" y="263" width="10" height="7" fill="#d8d8d8"/><path d="M20 265H28M20 267.500H28" stroke="#999"/><rect x="19" y="272" width="10" height="6" fill="#c9d3de"/><rect x="26" y="272" width="8" height="7" fill="#6aa06a"/></g>
<g><rect x="16" y="350" width="13" height="15" fill="#fff" stroke="#aaa"/><path d="M20 362L29 348 32 350 23 364 20 365Z" fill="#e6cc70" stroke="#a89040" stroke-width=".6"/></g>
<g><path d="M16 434H29L33 438V451H16Z" fill="#fff" stroke="#bbb"/><path d="M17 435H24V438H20V446H17Z" fill="#e8c648" stroke="#c9a310" stroke-width=".5"/><rect x="26" y="444" width="8" height="8" fill="#c9a310"/></g>
<g><path d="M16 462H29L33 466V479H16Z" fill="#f2f2f2" stroke="#bbb"/><path d="M19 466H26M19 469H26M19 472H24" stroke="#bbb"/><rect x="26" y="472" width="8" height="8" fill="#c9a310"/></g>
<g><path d="M16 491H29L33 495V506H16Z" fill="#eef1f5" stroke="#aaa"/><path d="M22 495L31 506" stroke="#b89a40" stroke-width="2.500"/><circle cx="22" cy="496" r="2.500" fill="#999"/></g>
</svg>
</div>
</body></html>
